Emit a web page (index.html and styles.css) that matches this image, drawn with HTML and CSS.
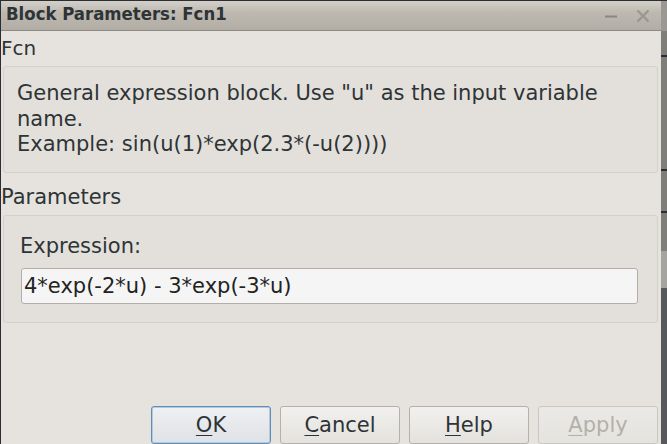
FILE: index.html
```html
<!DOCTYPE html>
<html>
<head>
<meta charset="utf-8">
<link rel="stylesheet" href="styles.css">
</head>
<body>
<div class="screen">
  <div class="window">
    <div class="titlebar">
      <span class="title">Block Parameters: Fcn1</span>
      <div class="controls">
        <svg class="ctl" width="14" height="14" viewBox="0 0 14 14"><path d="M1 7.5H13" stroke="#8a8781" stroke-width="2"/></svg>
        <svg class="ctl" width="14" height="14" viewBox="0 0 14 14"><path d="M1.5 1.5L12.5 12.5M12.5 1.5L1.5 12.5" stroke="#9a9791" stroke-width="2.4"/></svg>
      </div>
    </div>
    <div class="content">
      <div class="section-label fcn">Fcn</div>
      <div class="group desc">
        <p>General expression block. Use "u" as the input variable name.<br>Example: sin(u(1)*exp(2.3*(-u(2))))</p>
      </div>
      <div class="section-label params">Parameters</div>
      <div class="group paramgroup">
        <div class="field-label">Expression:</div>
        <div class="input">4*exp(-2*u) - 3*exp(-3*u)</div>
      </div>
      <div class="spacer"></div>
      <div class="buttons">
        <button class="btn default"><u>O</u>K</button>
        <button class="btn"><u>C</u>ancel</button>
        <button class="btn"><u>H</u>elp</button>
        <button class="btn disabled"><u>A</u>pply</button>
      </div>
    </div>
  </div>
  <div class="desktop"></div>
</div>
</body>
</html>
```

FILE: styles.css
```css
* { box-sizing: border-box; }
html, body { margin: 0; padding: 0; }
body {
  width: 667px;
  height: 444px;
  overflow: hidden;
  background: #2b2e33;
  font-family: "DejaVu Sans", sans-serif;
  color: #2e3436;
}
.screen {
  display: flex;
  width: 667px;
  height: 444px;
  border-top: 1px solid #2b2f34;
}
.window {
  width: 661px;
  height: 443px;
  display: flex;
  flex-direction: column;
  background: #e6e3de;
  border-left: 1px solid #2a2d31;
}
.titlebar {
  height: 30px;
  flex: none;
  display: flex;
  align-items: center;
  justify-content: space-between;
  padding: 0 11px 0 5px;
  background: linear-gradient(#d3d0c9, #bdb9b1 40%, #b2aea6);
  border-bottom: 1px solid #8e8a83;
}
.title {
  font-family: "DejaVu Sans Condensed", "DejaVu Sans", sans-serif;
  font-weight: bold;
  font-size: 18.4px;
  line-height: 22px;
  padding-bottom: 3px;
  color: #2e3436;
}
.controls {
  display: flex;
  gap: 18px;
  align-items: center;
}
.ctl { display: block; }
.content {
  flex: 1;
  display: flex;
  flex-direction: column;
  padding: 0 3px 0 0;
}
.section-label {
  font-size: 21px;
  line-height: 25px;
}
.fcn {
  margin-top: 5px;
  height: 30px;
  font-size: 20px;
}
.group {
  margin-left: 2px;
  background: #e3e0db;
  border: 1px solid #d4d1cb;
  border-radius: 3px;
}
.desc {
  height: 107px;
  padding: 14px 14px 0 13px;
}
.desc p {
  margin: 0;
  font-size: 21px;
  line-height: 25.5px;
}
.params {
  margin-top: 12px;
  height: 30px;
}
.paramgroup {
  height: 108px;
  padding: 18px 19px 0 17px;
}
.field-label {
  font-size: 21px;
  line-height: 25px;
  height: 34px;
  margin-left: -1px;
}
.input {
  height: 36px;
  background: #f5f5f5;
  border: 1px solid #b3afa8;
  border-radius: 3px;
  font-size: 21px;
  line-height: 34px;
  padding-left: 2px;
  color: #222;
}
.spacer { flex: 1; }
.buttons {
  display: flex;
  justify-content: flex-end;
  gap: 9px;
  height: 38px;
  flex: none;
}
.btn {
  width: 120px;
  height: 38px;
  font-family: "DejaVu Sans", sans-serif;
  font-size: 21px;
  color: #2e3436;
  background: linear-gradient(#f1f0ee, #e4e2de);
  border: 1px solid #b5b1aa;
  border-radius: 3px;
  padding: 0;
}
.btn u { text-decoration-thickness: 1px; text-underline-offset: 3px; }
.btn.default {
  border: 1px solid #5f8fb9;
  box-shadow: inset 0 0 0 1px #b3c9dc;
  background: linear-gradient(#eef0f2, #dfe2e6);
}
.btn.disabled {
  color: #b3b0aa;
  border-color: #cac7c1;
  background: linear-gradient(#ebe9e6, #e5e3df);
}
.desktop {
  width: 6px;
  height: 443px;
  background:
    linear-gradient(#2a2d31, #2a2d31) 0 54px / 6px 2px no-repeat,
    linear-gradient(#2a2d31, #2a2d31) 0 168px / 6px 2px no-repeat,
    linear-gradient(#2a2d31, #2a2d31) 0 210px / 6px 2px no-repeat,
    linear-gradient(#9a9894 0, #9a9894 30px, #7f7e7b 30px, #7f7e7b 250px, #a6a4a0 250px, #a6a4a0 287px, #56585b 287px);
}
```
